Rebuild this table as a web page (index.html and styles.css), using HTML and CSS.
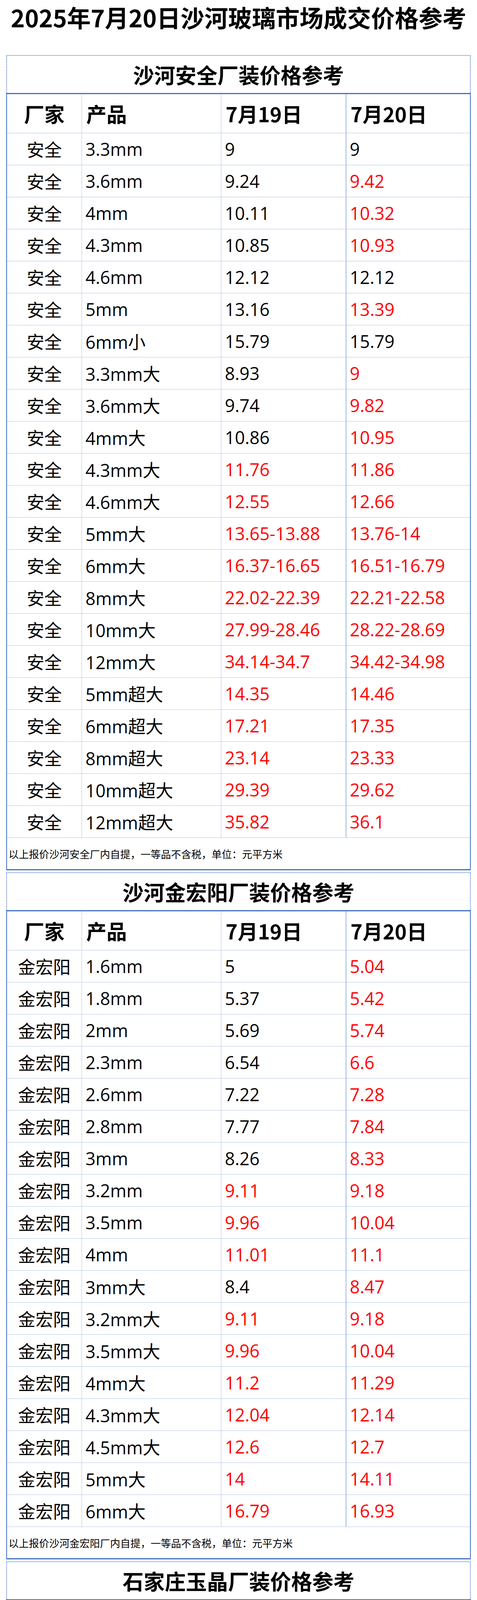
FILE: index.html
```html
<!DOCTYPE html>
<html lang="zh-CN">
<head>
<meta charset="utf-8">
<title>2025年7月20日沙河玻璃市场成交价格参考</title>
<link rel="stylesheet" href="styles.css">
</head>
<body>
<h1 class="page-title">2025年7月20日沙河玻璃市场成交价格参考</h1>

<section class="section">
  <h2 class="sec-title">沙河安全厂装价格参考</h2>
  <div class="grid">
    <div class="row head"><div class="c1">厂家</div><div class="c2">产品</div><div class="c3">7月19日</div><div class="c4">7月20日</div></div>
    <div class="row"><div class="c1">安全</div><div class="c2">3.3mm</div><div class="c3">9</div><div class="c4">9</div></div>
    <div class="row"><div class="c1">安全</div><div class="c2">3.6mm</div><div class="c3">9.24</div><div class="c4 r">9.42</div></div>
    <div class="row"><div class="c1">安全</div><div class="c2">4mm</div><div class="c3">10.11</div><div class="c4 r">10.32</div></div>
    <div class="row"><div class="c1">安全</div><div class="c2">4.3mm</div><div class="c3">10.85</div><div class="c4 r">10.93</div></div>
    <div class="row"><div class="c1">安全</div><div class="c2">4.6mm</div><div class="c3">12.12</div><div class="c4">12.12</div></div>
    <div class="row"><div class="c1">安全</div><div class="c2">5mm</div><div class="c3">13.16</div><div class="c4 r">13.39</div></div>
    <div class="row"><div class="c1">安全</div><div class="c2">6mm小</div><div class="c3">15.79</div><div class="c4">15.79</div></div>
    <div class="row"><div class="c1">安全</div><div class="c2">3.3mm大</div><div class="c3">8.93</div><div class="c4 r">9</div></div>
    <div class="row"><div class="c1">安全</div><div class="c2">3.6mm大</div><div class="c3">9.74</div><div class="c4 r">9.82</div></div>
    <div class="row"><div class="c1">安全</div><div class="c2">4mm大</div><div class="c3">10.86</div><div class="c4 r">10.95</div></div>
    <div class="row"><div class="c1">安全</div><div class="c2">4.3mm大</div><div class="c3 r">11.76</div><div class="c4 r">11.86</div></div>
    <div class="row"><div class="c1">安全</div><div class="c2">4.6mm大</div><div class="c3 r">12.55</div><div class="c4 r">12.66</div></div>
    <div class="row"><div class="c1">安全</div><div class="c2">5mm大</div><div class="c3 r">13.65-13.88</div><div class="c4 r">13.76-14</div></div>
    <div class="row"><div class="c1">安全</div><div class="c2">6mm大</div><div class="c3 r">16.37-16.65</div><div class="c4 r">16.51-16.79</div></div>
    <div class="row"><div class="c1">安全</div><div class="c2">8mm大</div><div class="c3 r">22.02-22.39</div><div class="c4 r">22.21-22.58</div></div>
    <div class="row"><div class="c1">安全</div><div class="c2">10mm大</div><div class="c3 r">27.99-28.46</div><div class="c4 r">28.22-28.69</div></div>
    <div class="row"><div class="c1">安全</div><div class="c2">12mm大</div><div class="c3 r">34.14-34.7</div><div class="c4 r">34.42-34.98</div></div>
    <div class="row"><div class="c1">安全</div><div class="c2">5mm超大</div><div class="c3 r">14.35</div><div class="c4 r">14.46</div></div>
    <div class="row"><div class="c1">安全</div><div class="c2">6mm超大</div><div class="c3 r">17.21</div><div class="c4 r">17.35</div></div>
    <div class="row"><div class="c1">安全</div><div class="c2">8mm超大</div><div class="c3 r">23.14</div><div class="c4 r">23.33</div></div>
    <div class="row"><div class="c1">安全</div><div class="c2">10mm超大</div><div class="c3 r">29.39</div><div class="c4 r">29.62</div></div>
    <div class="row"><div class="c1">安全</div><div class="c2">12mm超大</div><div class="c3 r">35.82</div><div class="c4 r">36.1</div></div>
    <div class="foot">以上报价沙河安全厂内自提，一等品不含税，单位：元平方米</div>
  </div>
</section>

<section class="section">
  <h2 class="sec-title">沙河金宏阳厂装价格参考</h2>
  <div class="grid">
    <div class="row head"><div class="c1">厂家</div><div class="c2">产品</div><div class="c3">7月19日</div><div class="c4">7月20日</div></div>
    <div class="row"><div class="c1">金宏阳</div><div class="c2">1.6mm</div><div class="c3">5</div><div class="c4 r">5.04</div></div>
    <div class="row"><div class="c1">金宏阳</div><div class="c2">1.8mm</div><div class="c3">5.37</div><div class="c4 r">5.42</div></div>
    <div class="row"><div class="c1">金宏阳</div><div class="c2">2mm</div><div class="c3">5.69</div><div class="c4 r">5.74</div></div>
    <div class="row"><div class="c1">金宏阳</div><div class="c2">2.3mm</div><div class="c3">6.54</div><div class="c4 r">6.6</div></div>
    <div class="row"><div class="c1">金宏阳</div><div class="c2">2.6mm</div><div class="c3">7.22</div><div class="c4 r">7.28</div></div>
    <div class="row"><div class="c1">金宏阳</div><div class="c2">2.8mm</div><div class="c3">7.77</div><div class="c4 r">7.84</div></div>
    <div class="row"><div class="c1">金宏阳</div><div class="c2">3mm</div><div class="c3">8.26</div><div class="c4 r">8.33</div></div>
    <div class="row"><div class="c1">金宏阳</div><div class="c2">3.2mm</div><div class="c3 r">9.11</div><div class="c4 r">9.18</div></div>
    <div class="row"><div class="c1">金宏阳</div><div class="c2">3.5mm</div><div class="c3 r">9.96</div><div class="c4 r">10.04</div></div>
    <div class="row"><div class="c1">金宏阳</div><div class="c2">4mm</div><div class="c3 r">11.01</div><div class="c4 r">11.1</div></div>
    <div class="row"><div class="c1">金宏阳</div><div class="c2">3mm大</div><div class="c3">8.4</div><div class="c4 r">8.47</div></div>
    <div class="row"><div class="c1">金宏阳</div><div class="c2">3.2mm大</div><div class="c3 r">9.11</div><div class="c4 r">9.18</div></div>
    <div class="row"><div class="c1">金宏阳</div><div class="c2">3.5mm大</div><div class="c3 r">9.96</div><div class="c4 r">10.04</div></div>
    <div class="row"><div class="c1">金宏阳</div><div class="c2">4mm大</div><div class="c3 r">11.2</div><div class="c4 r">11.29</div></div>
    <div class="row"><div class="c1">金宏阳</div><div class="c2">4.3mm大</div><div class="c3 r">12.04</div><div class="c4 r">12.14</div></div>
    <div class="row"><div class="c1">金宏阳</div><div class="c2">4.5mm大</div><div class="c3 r">12.6</div><div class="c4 r">12.7</div></div>
    <div class="row"><div class="c1">金宏阳</div><div class="c2">5mm大</div><div class="c3 r">14</div><div class="c4 r">14.11</div></div>
    <div class="row"><div class="c1">金宏阳</div><div class="c2">6mm大</div><div class="c3 r">16.79</div><div class="c4 r">16.93</div></div>
    <div class="foot">以上报价沙河金宏阳厂内自提，一等品不含税，单位：元平方米</div>
  </div>
</section>

<section class="section">
  <h2 class="sec-title">石家庄玉晶厂装价格参考</h2>
  <div class="grid">
    <div class="row head"><div class="c1">厂家</div><div class="c2">产品</div><div class="c3">7月19日</div><div class="c4">7月20日</div></div>
    <div class="row"><div class="c1">玉晶</div><div class="c2">4mm大</div><div class="c3 r">10.69</div><div class="c4 r">10.79</div></div>
    <div class="row"><div class="c1">玉晶</div><div class="c2">4.3mm大</div><div class="c3 r">11.49</div><div class="c4 r">11.6</div></div>
    <div class="row"><div class="c1">玉晶</div><div class="c2">5mm大</div><div class="c3 r">13.45</div><div class="c4 r">13.56</div></div>
    <div class="row"><div class="c1">玉晶</div><div class="c2">6mm大</div><div class="c3 r">16.04</div><div class="c4 r">16.19</div></div>
    <div class="row"><div class="c1">玉晶</div><div class="c2">7.2mm大</div><div class="c3 r">19.24</div><div class="c4 r">19.42</div></div>
    <div class="row"><div class="c1">玉晶</div><div class="c2">7.5mm大</div><div class="c3 r">20.04</div><div class="c4 r">20.23</div></div>
    <div class="row"><div class="c1">玉晶</div><div class="c2">8mm大</div><div class="c3 r">21.57</div><div class="c4 r">21.77</div></div>
    <div class="row"><div class="c1">玉晶</div><div class="c2">10mm大</div><div class="c3 r">26.21</div><div class="c4 r">26.46</div></div>
    <div class="row"><div class="c1">玉晶</div><div class="c2">12mm大</div><div class="c3 r">33.23</div><div class="c4 r">33.53</div></div>
    <div class="foot">以上报价石家庄玉晶厂内自提，一等品不含税，单位：元平方米</div>
  </div>
</section>
</body>
</html>
```

FILE: styles.css
```css
* {
  box-sizing: border-box;
}

html, body {
  margin: 0;
  padding: 0;
  background: #ffffff;
}

body {
  font-family: "Open Sans", "Noto Sans CJK SC", sans-serif;
  color: #000000;
}

.page-title {
  margin: 0;
  height: 141px;
  padding-top: 2px;
  font-family: "Noto Sans CJK SC", sans-serif;
  font-weight: 700;
  font-size: 61px;
  line-height: 84px;
  text-align: center;
  white-space: nowrap;
  letter-spacing: 0;
}

.section {
  margin: 0 16px 5px;
}

.sec-title {
  margin: 0;
  height: 97px;
  border: 2px dotted #4472c4;
  border-bottom: 0;
  display: flex;
  align-items: center;
  justify-content: center;
  font-family: "Noto Sans CJK SC", sans-serif;
  font-weight: 700;
  font-size: 54px;
  line-height: 1;
}

.grid {
  border-top: 3px solid #4472c4;
  border-bottom: 3px solid #4472c4;
  border-left: 2px solid #4472c4;
  border-right: 2px solid #4472c4;
}

.row {
  display: grid;
  grid-template-columns: 192px 357px 320px 1fr;
  height: 82px;
  border-bottom: 1px solid #b4c6e7;
  font-size: 45px;
}

.row > div {
  display: flex;
  align-items: center;
  padding-left: 9px;
  white-space: nowrap;
}

.row .c1 {
  justify-content: center;
  padding-left: 0;
  border-right: 1px solid #b4c6e7;
}

.row .c2 {
  border-right: 1px solid #b4c6e7;
}

.row .c3 {
  border-right: 1px solid #4472c4;
}

.row.head {
  height: 100px;
  font-family: "Noto Sans CJK SC", sans-serif;
  font-weight: 700;
  font-size: 52px;
}

.row.head > div {
  padding-left: 11px;
}

.row.head .c1 {
  padding-left: 0;
}

.r {
  color: #ff0000;
}

.foot {
  height: 80px;
  display: flex;
  align-items: center;
  padding-left: 4px;
  font-family: "Noto Sans CJK SC", sans-serif;
  font-size: 26px;
  white-space: nowrap;
}
```
